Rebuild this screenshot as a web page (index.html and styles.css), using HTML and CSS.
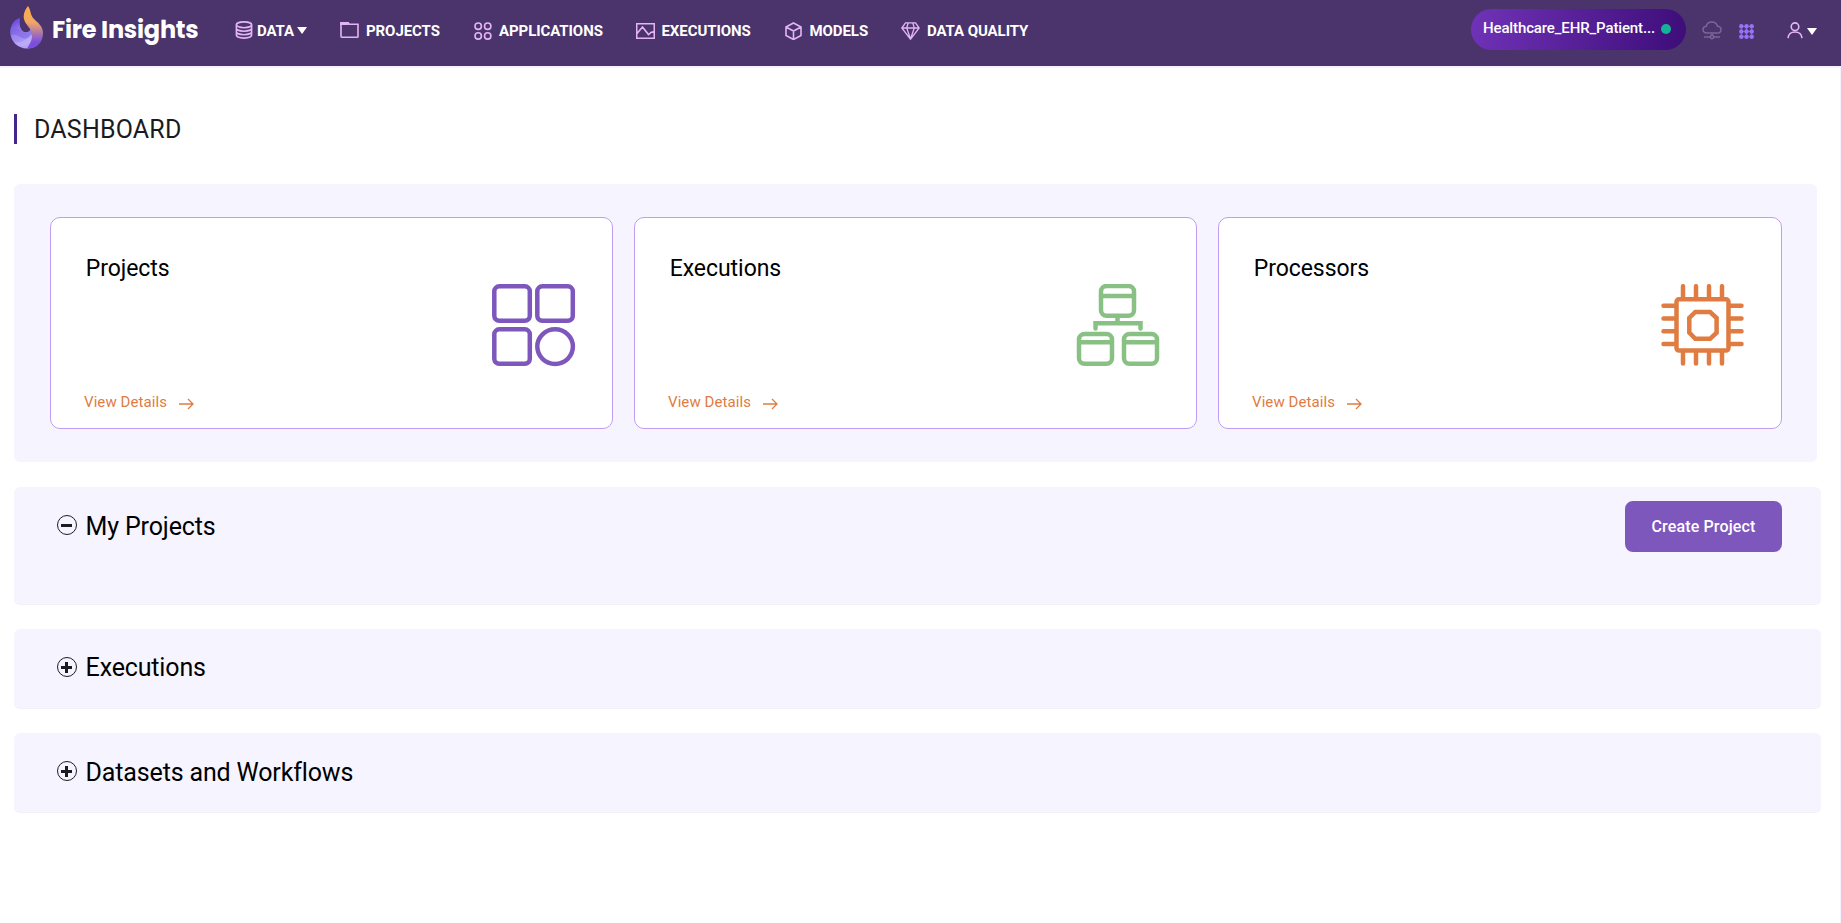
FILE: index.html
```html
<!DOCTYPE html>
<html lang="en">
<head>
<meta charset="utf-8">
<title>Fire Insights</title>
<link rel="stylesheet" href="styles.css">
</head>
<body>
<header class="topbar">
  <a class="brand">
    <svg class="brand-mark" width="33" height="43" viewBox="0 0 33 43">
      <defs>
        <linearGradient id="flame" x1="0" y1="0" x2="0" y2="1">
          <stop offset="0" stop-color="#fbb040"/><stop offset=".38" stop-color="#f2a766"/><stop offset=".68" stop-color="#a26fb4"/><stop offset=".85" stop-color="#7a4fe0"/>
        </linearGradient>
        <linearGradient id="swirl" x1="0" y1="0" x2=".6" y2="1">
          <stop offset="0" stop-color="#5a35dc"/><stop offset=".5" stop-color="#9c86f0"/><stop offset="1" stop-color="#b9a6f8"/>
        </linearGradient>
      </defs>
      <path fill="url(#swirl)" d="M10 12C4 13 0 20 .3 27 1 36 8 42.500 17 42.500c6 0 10-3 12-6L21 22c-1 4-4 5-7 4-4-2-5-8-4-14z"/>
      <path fill="#7a5ce6" d="M1 25c4-3 8-3 12 1 4 2 7 0 8-4l2 5c-2 5-7 7-13 4-3-2-6-3-9-2z" opacity=".5"/>
      <path fill="#c9bcfa" d="M4 36c6 1 12-1 17-8l2 4c-3 6-8 9-14 8z" opacity=".45"/>
      <path fill="url(#flame)" d="M18 0c-3 4-5 8-4 13 1 6 8 9 8 16 0 6-2 9-5 13.500 9 .5 16-5.500 16-15.500 0-7-5-10-9-14-4-4-3-9-6-13z"/>
    </svg>
    <span class="brand-name">Fire Insights</span>
  </a>
  <nav class="nav">
    <a class="nav-item nav-data">
      <svg class="line" width="18" height="18" viewBox="0 0 18 18"><ellipse cx="9" cy="3.800" rx="7.600" ry="2.900"/><path d="M1.400 3.800v10.300c0 1.700 3.400 3 7.600 3s7.600-1.300 7.600-3V3.800M1.400 7.200c0 1.700 3.400 3 7.600 3s7.600-1.300 7.600-3M1.400 10.700c0 1.700 3.400 3 7.600 3s7.600-1.300 7.600-3"/></svg>
      <span class="label">DATA</span><span class="caret"></span>
    </a>
    <a class="nav-item nav-projects">
      <svg class="line" width="19" height="17" viewBox="0 0 19 17"><path d="M1 15.300V1.700h7l1.500 1.600H18v12.200c0 .4-.3.700-.7.700H1.700c-.4 0-.7-.4-.7-.9z"/><path d="M1 2h7v1.200H1z"/></svg>
      <span class="label">PROJECTS</span>
    </a>
    <a class="nav-item nav-applications">
      <svg class="line" width="18" height="18" viewBox="0 0 18 18"><circle cx="4.200" cy="4.200" r="3.200"/><circle cx="13.700" cy="4.200" r="3.200"/><circle cx="4.200" cy="13.900" r="3.200"/><circle cx="13.700" cy="13.900" r="3.200"/></svg>
      <span class="label">APPLICATIONS</span>
    </a>
    <a class="nav-item nav-executions">
      <svg class="line" width="19" height="16" viewBox="0 0 19 16"><path d="M.7.700h17.600v14.600H.7zM1 10.500 6.500 4l6 7.600L15 9.500l3.300-1"/></svg>
      <span class="label">EXECUTIONS</span>
    </a>
    <a class="nav-item nav-models">
      <svg class="line" width="17" height="18" viewBox="0 0 17 18"><path d="M8.500 1 16 5v8.500l-7.500 4-7.500-4V5zM1 5l7.500 4L16 5M8.500 9v8.500"/></svg>
      <span class="label">MODELS</span>
    </a>
    <a class="nav-item nav-quality">
      <svg class="line thin" width="19" height="18" viewBox="0 0 19 18"><path d="M4.500.800h10l3.700 5.200-8.700 11.200L.8 6zM.8 6h17.400M7.200.800 5.700 6l3.800 11L13.300 6 11.800.800"/></svg>
      <span class="label">DATA QUALITY</span>
    </a>
  </nav>
  <div class="tools">
    <div class="pill"><span class="pill-text">Healthcare_EHR_Patient...</span><span class="dot"></span></div>
    <svg class="cloud" width="20" height="19" viewBox="0 0 20 19"><path d="M5 12C2.500 12 1 10.500 1 8.600 1 6.800 2.300 5.500 4.200 5.300 4.800 2.700 7 1 9.800 1s5 1.600 5.700 4.200C17.600 5.400 19 6.800 19 8.700 19 10.600 17.500 12 15.300 12zM10 12v2.500M2 16h6M12 16h6"/><circle cx="10" cy="16" r="1.700"/></svg>
    <svg class="apps" width="15" height="15" viewBox="0 0 15 15"><path d="M2.300 2.300h10.400v10.400H2.300zM7.500 2.300v10.400M2.300 7.500h10.400"/><circle cx="2.300" cy="2.300" r="2.200"/><circle cx="7.500" cy="2.300" r="2.200"/><circle cx="12.700" cy="2.300" r="2.200"/><circle cx="2.300" cy="7.500" r="2.200"/><circle cx="7.500" cy="7.500" r="2.200"/><circle cx="12.700" cy="7.500" r="2.200"/><circle cx="2.300" cy="12.700" r="2.200"/><circle cx="7.500" cy="12.700" r="2.200"/><circle cx="12.700" cy="12.700" r="2.200"/></svg>
    <svg class="line user" width="16" height="17" viewBox="0 0 16 17"><circle cx="8" cy="4.700" r="3.800"/><path d="M1 16.200c.4-4 3.200-6.200 7-6.200s6.600 2.200 7 6.200"/></svg>
    <span class="caret"></span>
  </div>
</header>
<main class="page">
  <h1 class="page-title">DASHBOARD</h1>
  <section class="cards">
    <article class="card">
      <h2 class="card-title">Projects</h2>
      <svg class="card-icon purple" width="84" height="83" viewBox="0 0 84 83"><rect x="2.300" y="2.300" width="35.500" height="34.500" rx="5"/><rect x="45.300" y="2.300" width="35.500" height="34.500" rx="5"/><rect x="2.300" y="45.300" width="35.500" height="34.500" rx="5"/><ellipse cx="63.100" cy="62.600" rx="17.800" ry="17.300"/></svg>
      <a class="details">View Details <svg width="15" height="12" viewBox="0 0 15 12"><path d="M0 6h13.500M9 1l5 5-5 5"/></svg></a>
    </article>
    <article class="card">
      <h2 class="card-title">Executions</h2>
      <svg class="card-icon green" width="84" height="83" viewBox="0 0 84 83"><rect x="25" y="2" width="33" height="29.700" rx="5.500"/><path d="M25 12h33M41.500 32v7M19.500 44.500V39.300h45v5.200" stroke-linecap="round"/><rect x="3" y="50" width="33" height="29.700" rx="5.500"/><rect x="48" y="50" width="33" height="29.700" rx="5.500"/><path d="M3 58.300h33M48 58.300h33"/></svg>
      <a class="details">View Details <svg width="15" height="12" viewBox="0 0 15 12"><path d="M0 6h13.500M9 1l5 5-5 5"/></svg></a>
    </article>
    <article class="card">
      <h2 class="card-title">Processors</h2>
      <svg class="card-icon orange" width="84" height="83" viewBox="0 0 84 83"><rect x="15.500" y="15.300" width="52" height="51.300" rx="2.500"/><path d="M34.300 28h14.800l6.500 6v14.700l-6.500 6.100H34.300l-6-6.100V34z"/><path stroke-linecap="round" d="M22 2.200v12M35 2.200v12M48 2.200v12M61 2.200v12M22 67.500v12M35 67.500v12M48 67.500v12M61 67.500v12M2.500 21.700h12M2.500 34.500h12M2.500 47.300h12M2.500 60h12M68.500 21.700h12M68.500 34.500h12M68.500 47.300h12M68.500 60h12"/></svg>
      <a class="details">View Details <svg width="15" height="12" viewBox="0 0 15 12"><path d="M0 6h13.500M9 1l5 5-5 5"/></svg></a>
    </article>
  </section>
  <section class="panel panel-open">
    <svg class="toggle" width="20" height="20" viewBox="0 0 20 20"><circle cx="10" cy="10" r="9.500"/><path d="M4 10.500h11"/></svg>
    <h2 class="panel-title">My Projects</h2>
    <button class="create" type="button">Create Project</button>
  </section>
  <section class="panel">
    <svg class="toggle" width="20" height="20" viewBox="0 0 20 20"><circle cx="10" cy="10" r="9.500"/><path d="M4 10.500h11M9.500 5v11"/></svg>
    <h2 class="panel-title panel-title-raised">Executions</h2>
  </section>
  <section class="panel">
    <svg class="toggle" width="20" height="20" viewBox="0 0 20 20"><circle cx="10" cy="10" r="9.500"/><path d="M4 10.500h11M9.500 5v11"/></svg>
    <h2 class="panel-title">Datasets and Workflows</h2>
  </section>
</main>
</body>
</html>
```
FILE: styles.css
```css
* { box-sizing: border-box; }
body { margin: 0; height: 923px; overflow: hidden; display: flex; flex-direction: column; background: #fff; color: #000; font-family: Roboto, "Liberation Sans", sans-serif; }
h1, h2 { margin: 0; font-weight: 400; }
svg { display: block; flex: none; }
.topbar { flex: none; height: 68px; display: flex; align-items: flex-start; background: #4b346c; border-bottom: 2px solid #f6f1ff; color: #fff; }
.brand { display: flex; width: 235px; padding: 6px 0 0 10px; }
.brand-name { margin: 6px 0 0 9px; font: 700 24px/36px Poppins, Inter, sans-serif; letter-spacing: -0.25px; white-space: nowrap; }
.nav { display: flex; width: 1236px; padding-top: 21px; }
.nav-item { display: flex; flex: none; height: 20px; font-size: 15px; line-height: 20px; font-weight: 700; letter-spacing: -0.08px; white-space: nowrap; }
.nav-data { width: 105px; }
.nav-projects { width: 134px; }
.nav-applications { width: 162px; }
.nav-executions { width: 149px; }
.nav-models { width: 116px; }
.label { margin-left: 7px; }
.nav-data .label { margin-left: 4px; }
.nav-executions .label { margin-left: 6.5px; }
.nav-models .label { margin-left: 7.5px; }
.nav-applications svg, .nav-models svg, .nav-quality svg { margin-top: 1px; }
.nav-executions svg { margin-top: 2px; }
.line { fill: none; stroke: #e3b5f3; stroke-width: 1.600; }
.thin { stroke-width: 1.300; }
.caret { flex: none; width: 10px; height: 7px; background: #fff; clip-path: polygon(0 0, 100% 0, 50% 100%); }
.nav-data .caret { margin: 6px 0 0 3px; }
.tools { display: flex; padding-top: 9px; }
.pill { display: flex; width: 215px; height: 41px; padding: 9px 15px 0 12px; border-radius: 21px; background: linear-gradient(100deg, #7033b8, #3d0d78); }
.pill-text { width: 178px; font-size: 15px; font-weight: 500; line-height: 20px; letter-spacing: -0.13px; white-space: nowrap; }
.dot { width: 10px; height: 10px; margin-top: 6px; border-radius: 50%; background: #14b397; }
.cloud { margin: 12px 0 0 16px; fill: none; stroke: #7b6696; stroke-width: 1.500; }
.apps { margin: 15px 0 0 17px; fill: #9672f8; stroke: none; }
.apps path { fill: none; stroke: #9672f8; stroke-width: .7; }
.user { margin: 13px 0 0 33px; }
.tools .caret { margin: 19px 0 0 4px; }
.page { flex: 1; padding: 46px 19px 0 14px; border-right: 1px solid #f5f1ff; }
.page-title { height: 30px; padding-left: 17px; border-left: 3px solid #44268c; color: #1b1b1f; font-size: 25px; line-height: 32px; letter-spacing: 0.2px; }
.cards { display: grid; grid-template-columns: 563px 563px 564px; gap: 21px; width: 1803px; height: 278px; margin-top: 40px; padding: 33px 35px 33px 36px; border-radius: 6px; background: #f6f4ff; }
.card { display: grid; grid-template: 146px 1fr / 1fr auto; padding: 27px 36px 0 33px; border: 1px solid #c19cf7; border-radius: 10px; background: #fff; }
.card-title { padding: 9px 0 0 1.7px; font-size: 23px; line-height: 30px; letter-spacing: -0.05px; }
.card-icon { margin-top: 39px; fill: none; stroke-width: 4.500; }
.purple { stroke: #7e57bd; }
.green { stroke: #88c183; }
.orange { stroke: #e07c42; }
.details { display: flex; height: 22px; gap: 12px; color: #e07c42; font-size: 15px; line-height: 22px; letter-spacing: 0.08px; white-space: nowrap; }
.details svg { margin-top: 7px; fill: none; stroke: #e07c42; stroke-width: 1.300; }
.panel { display: flex; width: 1807px; height: 80px; margin-top: 24px; padding: 0 39px 0 43px; border-bottom: 1px solid #f2f0f8; border-radius: 6px; background: #f6f4ff; }
.panel-open { height: 118px; margin-top: 25px; }
.toggle { margin-top: 28px; fill: none; stroke: #1c1c20; stroke-width: 1; }
.toggle path { stroke-width: 3; }
.panel-title { flex: 1; margin: 24px 0 0 8.6px; font-size: 25px; line-height: 32px; letter-spacing: -0.15px; font-variant-ligatures: common-ligatures; }
.panel-title-raised { margin-top: 23px; }
.create { width: 157px; height: 51px; margin-top: 14px; padding: 0; border: 0; border-radius: 8px; background: #7e57bd; color: #fff; font: 500 16px/51px Roboto, sans-serif; letter-spacing: 0.15px; }
```
